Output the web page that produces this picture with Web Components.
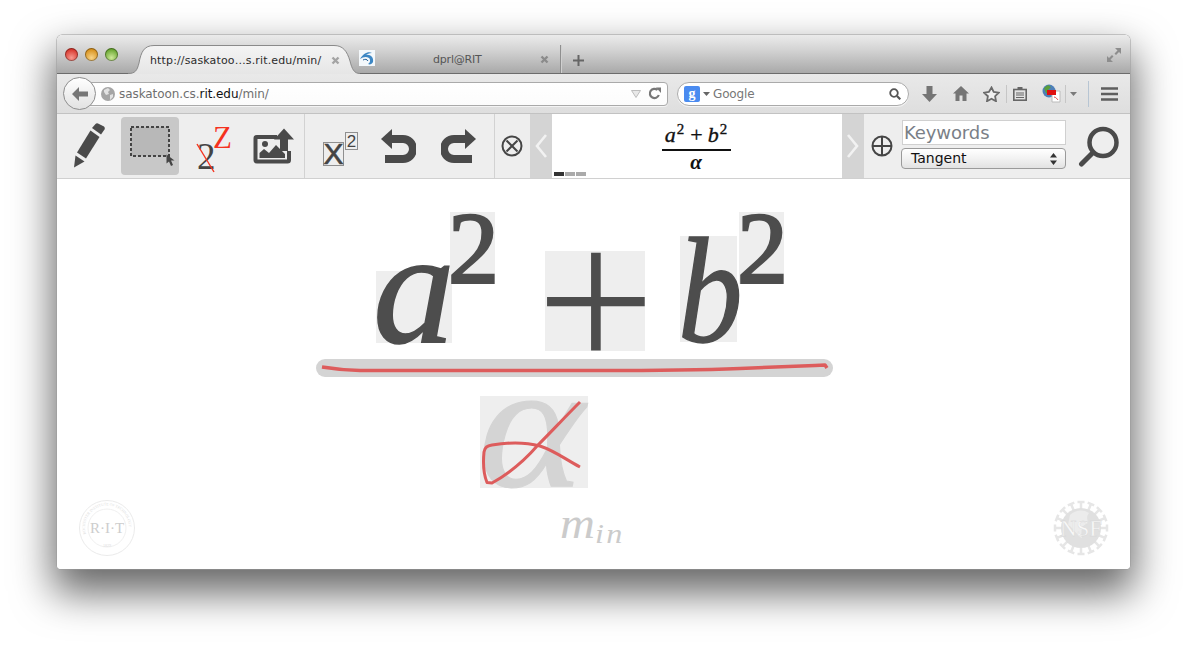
<!DOCTYPE html>
<html><head><meta charset="utf-8">
<style>
html,body{margin:0;padding:0;background:#fff;height:648px;overflow:hidden}
body{font-family:"DejaVu Sans",sans-serif}
</style></head><body>
<browser-window></browser-window>
<script>
function def(name,html){customElements.define(name,class extends HTMLElement{constructor(){super();this.attachShadow({mode:'open'}).innerHTML=html}})}
const X='<svg width="9" height="9" viewBox="0 0 9 9"><path d="M1.5 1.5l6 6M7.5 1.5l-6 6" stroke="#a4a4a4" stroke-width="2.4"/></svg>';

def('browser-tab',`<style>
:host{display:block;position:relative;width:232px;height:29px;flex:none;margin-bottom:-1px}
svg.bg{position:absolute;left:0;top:0}
.c{position:relative;display:flex;align-items:center;height:100%;padding:2px 0 0 22px;box-sizing:border-box;font-size:11px;color:#2b2b2b;white-space:nowrap}
.t{width:180px;letter-spacing:.14px;margin-right:.5px}
</style><svg class="bg" width="232" height="29" viewBox="0 0 232 29"><defs><linearGradient id="g" x1="0" y1="0" x2="0" y2="1"><stop offset="0" stop-color="#f4f4f4"/><stop offset="1" stop-color="#e6e6e6"/></linearGradient></defs><path d="M0 28.5C7 28.5 9 26 11 18C13 7 16 .5 26 .5H206C215 .5 219 6 222 16C224 24 226 28.5 232 28.5V29H0Z" fill="url(#g)"/><path d="M0 28.5C7 28.5 9 26 11 18C13 7 16 .5 26 .5H206C215 .5 219 6 222 16C224 24 226 28.5 232 28.5" fill="none" stroke="#8a8a8a"/></svg><div class="c"><span class="t">http://saskatoo…s.rit.edu/min/</span>${X}</div>`);

def('title-bar',`<style>
:host{display:flex;align-items:flex-end;height:38px;border-bottom:1px solid #6c6c6c;background:linear-gradient(#ebebeb,#d6d6d6 35%,#a9a9a9);border-radius:5px 5px 0 0;box-sizing:content-box;position:relative;z-index:1}
.lights{display:flex;gap:7px;align-self:flex-start;padding:13px 0 0 8px;width:65px;box-sizing:border-box;flex:none}
.l{width:13px;height:13px;border-radius:50%;flex:none;box-shadow:inset 0 0 0 1px rgba(0,0,0,.35);}
.r{background:radial-gradient(circle at 50% 75%,#f79a90,#d8382e 70%)}
.y{background:radial-gradient(circle at 50% 75%,#f8d488,#d8921e 70%)}
.g{background:radial-gradient(circle at 50% 75%,#cfe99a,#6aa732 70%)}
.tab2{display:flex;align-items:center;width:201px;height:28px;flex:none;font-size:11px;color:#555;box-sizing:border-box;border-right:1px solid #8f8f8f;box-shadow:1px 0 0 #d0d0d0}
.fav{width:16px;height:16px;background:#fff;flex:none;margin:-2px 0 0 -1px}
.tt{margin-left:58px;letter-spacing:-.2px;white-space:nowrap}
.tab2 svg.x{margin:0 11px 0 auto}
.plus{margin:0 0 7px 12px;flex:none}
.exp{position:absolute;right:8px;top:12px}
</style>
<div class="lights"><span class="l r"></span><span class="l y"></span><span class="l g"></span></div>
<browser-tab style="margin-left:6px"></browser-tab>
<div class="tab2">
<svg class="fav" viewBox="0 0 16 16"><rect width="16" height="16" fill="#f4f8fb"/><path d="M1 9C4 4 9 1 13 3C10 3 8 4 7 5C11 4 15 7 14 12C13 14 11 15 9 14C11 13 12 10 10 8C7 6 4 7 1 9Z" fill="#3d87c4"/><path d="M4 10C6 9 8 9 9 11" stroke="#1f5f99" fill="none"/></svg>
<span class="tt">dprl@RIT</span><svg class="x" width="9" height="9" viewBox="0 0 9 9"><path d="M1.5 1.5l6 6M7.5 1.5l-6 6" stroke="#8b8b8b" stroke-width="2.4"/></svg></div>
<svg class="plus" width="11" height="11" viewBox="0 0 11 11"><path d="M5.5 0v11M0 5.5h11" stroke="#666" stroke-width="2"/></svg>
<svg class="exp" width="16" height="16" viewBox="0 0 16 16" fill="#8d8d8d"><path d="M9 1h6v6l-2-2-3 3-1.500-1.500 3-3zM7 15H1V9l2 2 3-3 1.500 1.500-3 3z"/></svg>`);

def('url-bar',`<style>
:host{display:flex;align-items:center;flex:none;width:589px;height:24px;box-sizing:border-box;background:linear-gradient(#fff,#fcfcfc);border:1px solid #aaa;border-radius:0 4px 4px 0;padding:0 6px 0 21px;font-size:12px;color:#6f6f6f;white-space:nowrap;box-shadow:0 1px 0 #f4f4f4}
b{font-weight:400;color:#111}
.u{margin:1px 0 0 4px;flex:1;letter-spacing:-.07px}
</style>
<svg width="14" height="14" viewBox="0 0 14 14"><circle cx="7" cy="7" r="7" fill="#a5a5a5"/><path d="M3 3l4-2 2 2-2 2 1 2-3 1-2-3zM9 8l3-1 0 3-3 3z" fill="#e2e2e2"/></svg>
<span class="u">saskatoon.cs.<b>rit.edu</b>/min/</span>
<svg width="10" height="8" viewBox="0 0 10 8" style="margin-right:7px"><path d="M.5.500h9L5 7.500z" fill="#e8e8e8" stroke="#bdbdbd"/></svg>
<svg width="13" height="13" viewBox="0 0 13 13"><path d="M10.800 8A4.600 4.600 0 1 1 9.500 3" fill="none" stroke="#777" stroke-width="2.200"/><path d="M8 0.500L13 .5V6z" fill="#777"/></svg>`);

def('search-bar',`<style>
:host{display:flex;align-items:center;flex:none;width:232px;height:24px;box-sizing:border-box;background:#fff;border:1px solid #aaa;border-radius:12px;padding:0 7px 0 6px;font-size:12px;color:#777;box-shadow:0 1px 0 #f4f4f4}
.gi{width:16px;height:16px;background:#4a8bf0;border-radius:2px;color:#fff;font:700 14px/15px "Liberation Serif",serif;text-align:center;flex:none}
.t{flex:1;margin:1px 0 0 3px;letter-spacing:-.15px}
</style>
<span class="gi">g</span><svg width="7" height="4" viewBox="0 0 7 4" style="margin-left:3px"><path d="M0 0h7L3.500 4z" fill="#666"/></svg>
<span class="t">Google</span>
<svg width="12" height="12" viewBox="0 0 12 12"><circle cx="5" cy="5" r="3.800" fill="none" stroke="#555" stroke-width="1.800"/><path d="M8 8l3.300 3.300" stroke="#555" stroke-width="2.200"/></svg>`);

def('nav-bar',`<style>
:host{display:flex;align-items:center;height:39px;border-bottom:1px solid #c2c2c2;background:linear-gradient(#e9e9e9,#dedede);padding:0 0 0 6px;box-sizing:content-box}
.back{width:33px;height:33px;box-sizing:border-box;border-radius:50%;border:1px solid #8e8e8e;background:linear-gradient(#fff,#e2e2e2);position:relative;z-index:1;flex:none;margin-right:-17px;display:flex;align-items:center;justify-content:center}
.i{flex:none;display:flex;justify-content:center;align-items:center}
.sep{width:1px;height:26px;background:#c6c6c6;flex:none}
</style>
<div class="back"><svg width="18" height="16" viewBox="0 0 18 16"><path d="M8 1L1 8l7 7V10.500h9v-5H8z" fill="#777"/></svg></div>
<url-bar></url-bar><span style="width:9px;flex:none"></span><search-bar></search-bar>
<span class="i" style="width:41px"><svg width="15" height="16" viewBox="0 0 15 16"><path d="M4.500 0h6v8H15l-7.500 8L0 8h4.500z" fill="#757575"/></svg></span>
<span class="i" style="width:22px"><svg width="16" height="15" viewBox="0 0 16 15"><path d="M8 0L0 7.500h2.500V15H6.500V9.500H9.500V15H13.500V7.500H16z" fill="#757575"/></svg></span>
<span class="i" style="width:39px"><svg width="17" height="16" viewBox="0 0 17 16"><path d="M8.500 1.500l2.200 4.500 5 .7-3.600 3.500.9 5-4.500-2.400-4.500 2.400.9-5L.9 6.700l5-.7z" fill="#f0f0f0" stroke="#6a6a6a" stroke-width="1.800"/></svg></span>
<span class="sep" style="height:18px;margin-left:-5px"></span>
<span class="i" style="width:26px"><svg width="14" height="14" viewBox="0 0 14 14"><rect x=".8" y="2.500" width="12.400" height="10.700" fill="none" stroke="#666" stroke-width="1.600"/><rect x="4.500" y="0" width="5" height="3" fill="#666"/><path d="M3 6h8M3 8h8M3 10.500h8" stroke="#666" stroke-width="1.200"/></svg></span>
<span class="i" style="width:32px"><svg style="margin-left:5px" width="19" height="19" viewBox="0 0 19 19"><circle cx="7" cy="7" r="6.500" fill="#4e7fb8"/><path d="M2 4l4-3 3 2-3 3 1 4-3-1z" fill="#5a9e3a"/><path d="M10 7h8v11h-8z" fill="#fff" stroke="#bbb"/><rect x="5" y="6" width="9" height="5" fill="#e01010"/><path d="M12 13c2 0 3 2 4 3" stroke="#e05050" fill="none"/></svg></span>
<span class="sep" style="height:18px"></span>
<span class="i" style="width:15px"><svg width="7" height="4" viewBox="0 0 7 4"><path d="M0 0h7L3.500 4z" fill="#7a7a7a"/></svg></span>
<span class="sep" style="margin-left:7px;background:#b7c5d3"></span>
<span class="i" style="width:41px"><svg width="17" height="14" viewBox="0 0 17 14"><path d="M0 1.500h17M0 7h17M0 12.500h17" stroke="#5e5e5e" stroke-width="2.600" stroke-linecap="round"/></svg></span>`);

def('icon-btn',`<style>
:host{display:flex;flex:none;width:58px;height:58px;align-items:center;justify-content:center;position:relative;border-radius:4px}
:host([active]){background:#c8c8c8}
</style><slot></slot>`);

def('math-toolbar',`<style>
:host{display:flex;height:64px;border-bottom:1px solid #d0d0d0;background:#eee;box-sizing:content-box;align-items:stretch}
.g{display:flex;align-items:center;flex:none;box-sizing:border-box;border-right:1px solid #d2d2d2}
.g1{width:248px;gap:3px;padding-left:3px}
.g2{width:190px}
.g3{width:35px;justify-content:center;border-right:0;padding-right:2px}
.car{display:flex;flex:none;width:334px}
.arr{width:22px;flex:none;background:#d4d4d4;display:flex;align-items:center;justify-content:center}
.pane{flex:1;background:#fff;position:relative;display:flex;flex-direction:column;align-items:center;font-family:"Liberation Serif",serif;color:#111;padding:6px 2px 0 0;box-sizing:border-box}
.num{font:italic 400 22px/29px "Liberation Serif",serif;white-space:nowrap;-webkit-text-stroke:.35px #111;display:flex;align-items:baseline}
.num sup{font:400 15px/0 "Liberation Serif",serif;position:relative;top:-8px;margin-left:1px}
.num i{font-style:normal;font-weight:400;margin:0 5px 0 6px}
.bar{width:69px;height:2px;background:#111}
.den{font:italic 700 21px/22px "Liberation Serif",serif}
.dots{position:absolute;left:2px;bottom:2px;display:flex;gap:1px}
.dots span{width:10px;height:4px;background:#aaa}
.dots span:first-child{background:#333}
.plus{width:37px;flex:none;display:flex;justify-content:center;align-items:center;padding-right:1px;box-sizing:border-box}
.form{display:flex;flex-direction:column;gap:3px;flex:none;width:165px;align-items:flex-end;margin-top:6px}
.kw{width:164px;height:25px;box-sizing:border-box;background:#fff;border:1px solid #d0d0d0;font-size:18px;line-height:23px;color:#7a7f87;padding-left:1px;letter-spacing:-.1px}
.sel{width:165px;height:21px;box-sizing:border-box;background:linear-gradient(#fff,#f2f2f2 50%,#e2e2e2);border:1px solid #9a9a9a;border-radius:4px;font-size:14px;line-height:19px;color:#111;padding:0 8px 0 9px;display:flex;justify-content:space-between;align-items:center}
.mag{flex:1;display:flex;justify-content:center;align-items:center;padding-left:2px}
.s{position:absolute;font-family:"Liberation Serif",serif;line-height:1}
.box{position:absolute;border:1px solid #8f8f8f;box-sizing:border-box;font-family:"Liberation Sans",sans-serif;color:#444;display:flex;align-items:center;justify-content:center;line-height:1;background:#eee}
</style>
<div class="g g1">
<icon-btn><svg style="margin-left:2px" width="36" height="48" viewBox="71 122 36 48" fill="#4a4a4a"><path d="M73 167.500L74.500 155.500L83.500 161.500Z"/><path d="M76 152.500L85 158.500L98.500 137L89.500 130.500Z"/><path d="M91 128L100 134.500L103.500 129.500Q104.500 128 103 126.500L97 123.500Q95.500 123 94.500 124Z"/></svg></icon-btn>
<icon-btn active><svg style="margin-left:4px" width="46" height="42" viewBox="129 129 46 42"><rect x="131" y="131" width="38" height="29" fill="#b8b8b8" stroke="#444" stroke-width="2" stroke-dasharray="3 2"/><path d="M166.500 158.500V167.500L169 165.500L171 170L173 169L171 164.500H174.500Z" fill="#444"/></svg></icon-btn>
<icon-btn><span class="s" style="left:15px;top:21px;font-size:37px;color:#444">2</span><span class="s" style="left:31px;top:5px;font-size:31px;color:#f5321e">Z</span><svg style="position:absolute;left:14px;top:25px" width="20" height="32" viewBox="0 0 20 32"><path d="M1 2L18 30" stroke="#f5321e" stroke-width="1.400"/></svg></icon-btn>
<icon-btn><svg style="margin-left:4px" width="42" height="36" viewBox="252 127 42 36"><path d="M276 136H256a1.500 1.500 0 0 0-1.500 1.500V159a1.500 1.500 0 0 0 1.500 1.500h30.500a1.500 1.500 0 0 0 1.500-1.500V150" fill="none" stroke="#4a4a4a" stroke-width="4"/><circle cx="264" cy="143" r="3" fill="#4a4a4a"/><path d="M258.500 157V152L263 148L268 152L275 144L284 153V157Z" fill="#4a4a4a"/><path d="M283 127.500L293 138.500H287V150H279V138.500H273Z" fill="#4a4a4a"/></svg></icon-btn>
</div>
<div class="g g2">
<icon-btn style="width:70px"><span class="box" style="left:18px;top:25px;width:21px;height:24px;font-size:30px;-webkit-text-stroke:.6px #444">X</span><span class="box" style="left:40px;top:15px;width:13px;height:18px;font-size:17px;">2</span></icon-btn>
<icon-btn style="width:46px"><svg width="36" height="36" viewBox="381 127 36 36"><path d="M382 138L393 128V148Z" fill="#4a4a4a"/><path d="M391 138H404a10 10 0 0 1 0 20H386" fill="none" stroke="#4a4a4a" stroke-width="8"/></svg></icon-btn>
<icon-btn style="width:76px"><svg width="36" height="36" viewBox="443 127 36 36"><path d="M478 138L467 128V148Z" fill="#4a4a4a"/><path d="M469 138H456a10 10 0 0 0 0 20H474" fill="none" stroke="#4a4a4a" stroke-width="8"/></svg></icon-btn>
</div>
<div class="g g3"><svg width="22" height="22" viewBox="0 0 22 22"><circle cx="11" cy="11" r="9.500" fill="none" stroke="#454545" stroke-width="2"/><path d="M5.500 5.500L16.500 16.500M16.500 5.500L5.500 16.500" stroke="#454545" stroke-width="2"/></svg></div>
<div class="car">
<div class="arr" ><svg width="12" height="24" viewBox="0 0 12 24"><path d="M11 1L2 12l9 11" fill="none" stroke="#f2f2f2" stroke-width="2.600"/></svg></div>
<div class="pane"><div class="num">a<sup>2</sup><i>+</i>b<sup>2</sup></div><div class="bar"></div><div class="den">α</div><div class="dots"><span></span><span></span><span></span></div></div>
<div class="arr"><svg width="12" height="24" viewBox="0 0 12 24"><path d="M1 1l9 11L1 23" fill="none" stroke="#f2f2f2" stroke-width="2.600"/></svg></div>
</div>
<div class="plus"><svg width="22" height="22" viewBox="0 0 22 22"><circle cx="11" cy="11" r="9.500" fill="none" stroke="#454545" stroke-width="2"/><path d="M11 2V20M2 11H20" stroke="#454545" stroke-width="2"/></svg></div>
<div class="form"><div class="kw">Keywords</div><div class="sel"><span>Tangent</span><svg width="7" height="12" viewBox="0 0 7 12"><path d="M3.500 0L7 4.500H0zM3.500 12L0 7.500H7z" fill="#333"/></svg></div></div>
<div class="mag"><svg width="42" height="42" viewBox="1078 125 42 42"><circle cx="1103" cy="142.500" r="13.500" fill="none" stroke="#4a4a4a" stroke-width="4.500"/><path d="M1092.500 153L1081.500 164" stroke="#4a4a4a" stroke-width="5" stroke-linecap="round"/></svg></div>`);

function rays(){let s='';for(let i=0;i<16;i++){const a=i*Math.PI/8,c=Math.cos(a),d=Math.sin(a);const x=28+c*26,y=28+d*26,px=-d*3.5,py=c*3.5;s+=`<path d="M${28+c*19} ${28+d*19}L${x} ${y}M${x+px} ${y+py}L${x-px} ${y-py}"/>`}return s}

def('math-canvas',`<style>
:host{display:block;position:relative;flex:1;background:#fff;border-radius:0 0 4px 4px;overflow:hidden}
.sym{position:absolute;background:#eee}
.g{position:absolute;font-family:"Liberation Serif",serif;line-height:1;white-space:nowrap;color:#4d4d4d;transform-origin:0 0}
.it{font-style:italic;-webkit-text-stroke:1.500px #4d4d4d}
.two{font-size:102px;top:19px;-webkit-text-stroke:2.500px #4d4d4d}
.bar{position:absolute;left:259px;top:180px;width:517px;height:18px;border-radius:9px;background:#d4d4d4}
svg.ink{position:absolute;left:0;top:0}
.foot{position:absolute}
.min{position:absolute;left:503px;top:323px;font:italic 400 44px/1 "Liberation Serif",serif;color:#cbcbcb;white-space:nowrap;display:flex;align-items:baseline}
.min .m{display:inline-block;transform:scaleX(1.1);transform-origin:0 0;margin-right:3px}
.min .n{display:inline-block;font-size:28px;position:relative;top:5px;letter-spacing:2px;transform:scaleX(1.15);transform-origin:0 0}
</style>
<div class="sym" style="left:319px;top:92px;width:76px;height:72px"></div>
<div class="sym" style="left:393px;top:33px;width:45px;height:72px"></div>
<div class="sym" style="left:488px;top:72px;width:100px;height:100px"></div>
<div class="sym" style="left:623px;top:57px;width:57px;height:106px"></div>
<div class="sym" style="left:682px;top:33px;width:45px;height:72px"></div>
<div class="sym" style="left:423px;top:217px;width:108px;height:92px"></div>
<span class="g it" style="left:316px;top:26px;font-size:164px">a</span>
<span class="g two" style="left:391px">2</span>
<span class="g" style="left:466px;top:45px;font-size:226px;line-height:120px;font-family:Inter,sans-serif;font-weight:200">+</span>
<span class="g it" style="left:621px;top:37px;font-size:150px;transform:scaleX(.86)">b</span>
<span class="g two" style="left:680px">2</span>
<span class="g" style="left:421px;top:197px;font-size:180px;line-height:100px;font-style:italic;color:#d4d4d4;-webkit-text-stroke:1px #d4d4d4;transform:scaleX(1.125)">α</span>
<div class="bar"></div>
<svg class="ink" width="1073" height="390" viewBox="57 179 1073 390" fill="none" stroke="#dd5c5c" stroke-width="3.500" stroke-linejoin="round"><path d="M322 367C328 368 340 370 360 370.500L600 370.500C650 370.500 700 370 740 368.500C770 367.500 800 366 815 365.500L825 365L827 368"/><path d="M580 402C565 417 550 433 538 445C525 460 510 473 492 483L487 482.500C484 475 483 462 484 452C485 447 487 446 492 445C510 442 525 442 540 446C555 451 565 459 580 467" stroke-width="3"/></svg>
<svg class="foot" style="left:22px;top:321px" width="56" height="56" viewBox="0 0 56 56"><defs><path id="ring" d="M7 34A22 22 0 1 1 49 34"/></defs><circle cx="28" cy="28" r="27.500" fill="none" stroke="#ebebeb"/><circle cx="28" cy="28" r="19" fill="none" stroke="#f0f0f0"/><text font-family="Liberation Serif" font-size="3.800" fill="#dcdcdc"><textPath href="#ring">ROCHESTER INSTITUTE OF TECHNOLOGY</textPath></text><text x="28" y="33" text-anchor="middle" font-family="Liberation Serif" font-size="15" fill="#cdcdcd">R·I·T</text><text x="28" y="47" text-anchor="middle" font-family="Liberation Serif" font-size="4" fill="#dcdcdc">1829</text></svg>
<div class="min"><span class="m">m</span><span class="n">in</span></div>
<svg class="foot" style="left:996px;top:321px" width="56" height="56" viewBox="0 0 56 56"><g stroke="#e6e6e6" stroke-width="2.500" fill="none">${rays()}</g><circle cx="28" cy="28" r="20" fill="#e0e0e0"/><path d="M17 15C22 10 30 9 36 13C32 18 36 20 34 24C30 24 27 30 29 38C24 36 21 28 15 25Z" fill="#ececec"/><text x="28" y="36" text-anchor="middle" font-family="Liberation Serif" font-size="23" fill="#f8f8f8" stroke="#d2d2d2" stroke-width=".3">NSF</text></svg>`);

def('browser-window',`<style>
:host{display:flex;flex-direction:column;width:1073px;height:534px;margin:35px 0 0 57px;border-radius:5px 5px 4px 4px;box-shadow:0 0 0 .5px #9a9a9a,0 20px 40px 4px rgba(0,0,0,.6);background:#fff;font-family:"DejaVu Sans",sans-serif}
</style><title-bar></title-bar><nav-bar></nav-bar><math-toolbar></math-toolbar><math-canvas></math-canvas>`);
</script>
</body></html>
